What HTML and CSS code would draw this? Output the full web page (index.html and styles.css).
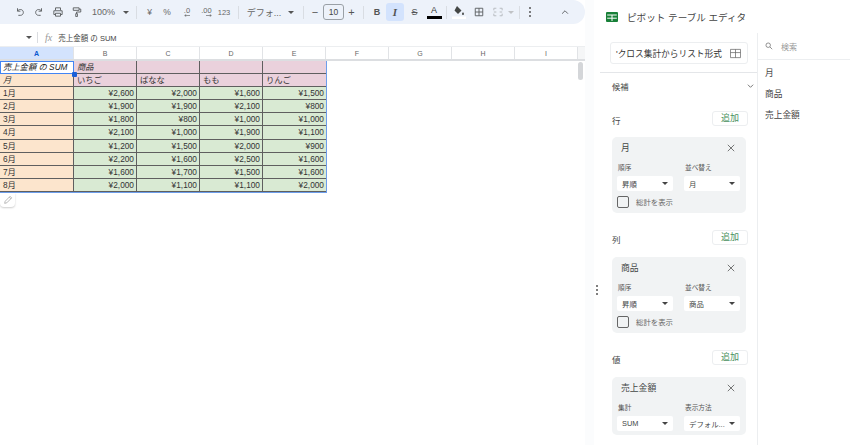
FILE: index.html
```html
<!DOCTYPE html>
<html lang="ja">
<head>
<meta charset="utf-8">
<title>ピボット テーブル エディタ</title>
<link rel="stylesheet" href="styles.css">
</head>
<body>
<div class="app">
  <main class="sheet">
    <div class="toolbar">
      <svg class="ic" viewBox="0 0 12 12"><path d="M3 1.500v3.500h3.500M3 5c1-1.500 2-2 3.500-2 2 0 3.500 1.500 3.500 3.500S8.500 10 6.500 10H4"/></svg>
      <svg class="ic" viewBox="0 0 12 12"><path d="M9 1.500v3.500H5.500M9 5c-1-1.500-2-2-3.500-2C3.500 3 2 4.500 2 6.500S3.500 10 5.500 10H8"/></svg>
      <svg class="ic" viewBox="0 0 12 12"><path d="M3 4V1h6v3M3 9H1V4.500h10V9H9M3 7.500h6V11H3z"/></svg>
      <svg class="ic" viewBox="0 0 12 12"><path d="M1.500 1h7v3h-7zM8.500 2.500H10.500V6H5.500V8M4.500 8h2v3.500h-2z"/></svg>
      <span class="tb-text zoom">100%</span>
      <span class="caret"></span>
      <span class="sep"></span>
      <span class="tb-text">¥</span>
      <span class="tb-text">%</span>
      <span class="dec"><span class="tb-text small">.0</span><svg class="dec-arrow" viewBox="0 0 8 4"><path d="M8 2H1M3 .500L1 2l2 1.500"/></svg></span>
      <span class="dec"><span class="tb-text small">.00</span><svg class="dec-arrow" viewBox="0 0 8 4"><path d="M0 2h7M5 .500L7 2 5 3.500"/></svg></span>
      <span class="tb-text small">123</span>
      <span class="sep"></span>
      <span class="tb-text font">デフォ...</span>
      <span class="caret"></span>
      <span class="sep"></span>
      <span class="tb-text pm">−</span>
      <span class="fsize">10</span>
      <span class="tb-text pm">+</span>
      <span class="sep"></span>
      <span class="tb-btn bold">B</span>
      <span class="tb-btn italic">I</span>
      <span class="tb-btn strike">S</span>
      <span class="tb-btn color">A</span>
      <span class="sep"></span>
      <svg class="ic fill" viewBox="0 0 14 14"><path class="solid" d="M5 1l4.500 4.500-3.500 3.500-3.500-3.500zM11 7c.7 1 1 1.500 1 2a1 1 0 0 1-2 0c0-.5.300-1 1-2z"/><rect class="white" x="0" y="11.500" width="14" height="2.500"/></svg>
      <svg class="ic" viewBox="0 0 12 12"><path d="M1.500 1.500h9v9h-9zM6 1.500v9M1.500 6h9"/></svg>
      <svg class="ic merge" viewBox="0 0 12 12"><path d="M1 4V1.500h3M8 1.500h3V4M1 8v2.500h3M8 10.500h3V8M1 6h3M8 6h3"/></svg>
      <span class="caret light"></span>
      <span class="sep"></span>
      <span class="dots"><i></i><i></i><i></i></span>
      <svg class="ic chev" viewBox="0 0 12 12"><path d="M2.500 8L6 4.500 9.500 8"/></svg>
    </div>
    <div class="formula">
      <span class="caret dark"></span>
      <span class="f-sep"></span>
      <span class="fx">fx</span>
      <span class="f-text">売上金額 の SUM</span>
    </div>
    <div class="col-heads">
      <div class="ch active">A</div><div class="ch">B</div><div class="ch">C</div><div class="ch">D</div><div class="ch">E</div><div class="ch">F</div><div class="ch">G</div><div class="ch">H</div><div class="ch">I</div>
      <div class="ch-end"></div>
    </div>
    <div class="grid-wrap">
      <div class="grid">
        <div class="c a it sel">売上金額 の SUM</div><div class="c p it">商品</div><div class="c p"></div><div class="c p"></div><div class="c p e"></div>
        <div class="c a it">月</div><div class="c p">いちご</div><div class="c p">ばなな</div><div class="c p">もも</div><div class="c p e">りんご</div>
        <div class="c a">1月</div><div class="c g">¥2,600</div><div class="c g">¥2,000</div><div class="c g">¥1,600</div><div class="c g e">¥1,500</div>
        <div class="c a">2月</div><div class="c g">¥1,900</div><div class="c g">¥1,900</div><div class="c g">¥2,100</div><div class="c g e">¥800</div>
        <div class="c a">3月</div><div class="c g">¥1,800</div><div class="c g">¥800</div><div class="c g">¥1,000</div><div class="c g e">¥1,000</div>
        <div class="c a">4月</div><div class="c g">¥2,100</div><div class="c g">¥1,000</div><div class="c g">¥1,900</div><div class="c g e">¥1,100</div>
        <div class="c a">5月</div><div class="c g">¥1,200</div><div class="c g">¥1,500</div><div class="c g">¥2,000</div><div class="c g e">¥900</div>
        <div class="c a">6月</div><div class="c g">¥2,200</div><div class="c g">¥1,600</div><div class="c g">¥2,500</div><div class="c g e">¥1,600</div>
        <div class="c a">7月</div><div class="c g">¥1,600</div><div class="c g">¥1,700</div><div class="c g">¥1,500</div><div class="c g e">¥1,600</div>
        <div class="c a">8月</div><div class="c g">¥2,000</div><div class="c g">¥1,100</div><div class="c g">¥1,100</div><div class="c g e">¥2,000</div>
        <span class="handle"></span>
      </div>
      <div class="pencil"><svg viewBox="0 0 12 12"><path d="M2 10l.600-2.500L8.500 1.600l1.900 1.900L4.500 9.400zM7.500 2.600l1.900 1.900"/></svg></div>
      <div class="scrollbar"><div class="thumb"></div></div>
    </div>
  </main>
  <div class="gutter"><span class="handle-dots"><i></i><i></i><i></i></span></div>
  <aside class="panel">
    <header class="p-head">
      <svg class="logo" viewBox="0 0 12 10"><rect width="12" height="10" rx="1" fill="#188038"/><path d="M1.200 3h9.600M1.200 6.200h9.600M6 3v6" stroke="#fff" stroke-width="1"/></svg>
      <span class="p-title">ピボット テーブル エディタ</span>
    </header>
    <div class="p-body">
      <div class="p-left">
        <div class="range-wrap">
          <div class="range"><span class="range-text">'クロス集計からリスト形式</span>
            <svg class="range-ic" viewBox="0 0 12 12"><path d="M.500 1.500h11v9H.500zM.500 5h11M6 1.500v9"/></svg></div>
        </div>
        <div class="suggest"><span>候補</span><svg class="sug-chev" viewBox="0 0 8 6"><path d="M1 1.500l3 3 3-3"/></svg></div>
        <div class="sec-head s-first"><span class="sec-label">行</span><button class="add">追加</button></div>
        <section class="card">
          <div class="card-head"><span>月</span><svg class="x" viewBox="0 0 10 10"><path d="M1 1l8 8M9 1l-8 8"/></svg></div>
          <div class="fields">
            <div class="field"><label>順序</label><div class="dd"><span>昇順</span><i></i></div></div>
            <div class="field"><label>並べ替え</label><div class="dd"><span>月</span><i></i></div></div>
          </div>
          <div class="check"><span class="box"></span><span>総計を表示</span></div>
        </section>
        <div class="sec-head"><span class="sec-label">列</span><button class="add">追加</button></div>
        <section class="card">
          <div class="card-head"><span>商品</span><svg class="x" viewBox="0 0 10 10"><path d="M1 1l8 8M9 1l-8 8"/></svg></div>
          <div class="fields">
            <div class="field"><label>順序</label><div class="dd"><span>昇順</span><i></i></div></div>
            <div class="field"><label>並べ替え</label><div class="dd"><span>商品</span><i></i></div></div>
          </div>
          <div class="check"><span class="box"></span><span>総計を表示</span></div>
        </section>
        <div class="sec-head"><span class="sec-label">値</span><button class="add">追加</button></div>
        <section class="card">
          <div class="card-head"><span>売上金額</span><svg class="x" viewBox="0 0 10 10"><path d="M1 1l8 8M9 1l-8 8"/></svg></div>
          <div class="fields">
            <div class="field"><label>集計</label><div class="dd"><span>SUM</span><i></i></div></div>
            <div class="field"><label>表示方法</label><div class="dd"><span>デフォル...</span><i></i></div></div>
          </div>
        </section>
      </div>
      <div class="p-right">
        <div class="search">
          <svg class="s-ic" viewBox="0 0 10 10"><circle cx="4" cy="4" r="2.800"/><path d="M6.200 6.200L9 9"/></svg>
          <span>検索</span>
        </div>
        <ul class="f-list"><li>月</li><li>商品</li><li>売上金額</li></ul>
      </div>
    </div>
  </aside>
</div>
</body>
</html>
```

FILE: styles.css
```css
* { box-sizing: border-box; }
html, body { margin: 0; height: 100%; overflow: hidden; background: #fff; }
body { font-family: "Liberation Sans", "Noto Sans CJK JP", sans-serif; color: #444746; }
.app { display: flex; width: 850px; height: 445px; }

/* Sheet */
.sheet { width: 585px; flex: none; background: #fff; display: flex; flex-direction: column; }
.toolbar {
  height: 24px; background: #edf2fa; border-radius: 0 12px 12px 0; flex: none; padding-left: 10px;
  display: grid; align-items: center; justify-items: center;
  grid-template-columns: 19.500px 19.500px 18.500px 18.500px 35px 10px 11px 15px 20px 20px 19px 16px 13px 38px 15px 10px 14px 23px 13px 11px 16px 20px 19px 20px 4px 21px 20px 18px 8px 9px 12px 49px;
}
.ic { width: 10px; height: 10px; fill: none; stroke: #5a5d5f; stroke-width: 1.100; }
.tb-text { font-size: 8.500px; color: #666; white-space: nowrap; }
.zoom { font-size: 9px; }
.caret { width: 0; height: 0; border: 3px solid transparent; border-top: 3px solid #555; border-bottom: 0; }
.caret.light { border-top-color: #c0c2c5; }
.sep { width: 1px; height: 13px; background: #d9dde3; }
.small { font-size: 7.500px; line-height: 7px; }
.dec { display: flex; flex-direction: column; align-items: flex-end; }
.dec-arrow { width: 6px; height: 3px; fill: none; stroke: #555; stroke-width: .8; }
.font { font-size: 9px; }
.pm { font-size: 11px; color: #555; }
.fsize { width: 21px; height: 16px; border: 1px solid #9aa0a6; border-radius: 3px; font-size: 8.500px; text-align: center; line-height: 14px; }
.tb-btn { height: 18px; width: 18px; border-radius: 3px; font-size: 9px; text-align: center; line-height: 18px; color: #555; }
.bold { font-weight: bold; }
.italic { background: #d3e3fd; font-style: italic; font-weight: bold; font-size: 11px; font-family: "Liberation Serif", serif; }
.strike { text-decoration: line-through; }
.color { border-bottom: 3px solid #000; height: 14px; line-height: 10px; width: 15px; border-radius: 0; color: #333; }
.fill { width: 14px; height: 14px; stroke: none; }
.solid { fill: #444746; }
.white { fill: #fff; }
.merge { stroke: #b5b8bc; }
.dots { display: flex; flex-direction: column; gap: 2px; }
.dots i { width: 2px; height: 2px; background: #555; border-radius: 50%; }
.chev { justify-self: start; margin-left: 24px; }

.formula { height: 18px; margin-top: 4px; display: flex; align-items: center; padding-left: 26px; flex: none; font-size: 7.500px; }
.f-sep { width: 1px; height: 11px; background: #dadce0; margin-left: 5px; }
.fx { font-family: "Liberation Serif", serif; font-style: italic; color: #999; font-size: 10px; margin-left: 7px; margin-right: 6px; }
.f-text { color: #444; }

.col-heads { height: 15px; display: flex; flex: none; border-top: 1px solid #eceef0; border-bottom: 2px solid #dcdee1; }
.ch { width: 63px; font-size: 7px; line-height: 13px; text-align: center; color: #666; border-right: 1px solid #e1e3e6; flex: none; }
.ch.active { width: 74px; background: #d3e3fd; color: #0b57d0; font-weight: bold; }
.ch-end { flex: 1; background: #f5f6f7; }

.grid-wrap { flex: 1; display: flex; position: relative; }
.grid { display: grid; grid-template-columns: 74px 63px 63px 63px 63px; grid-auto-rows: 13.100px; width: 327px; height: 132px; position: relative; border-right: 1px solid #6d9eeb; border-bottom: 1px solid #6d9eeb; flex: none; align-self: flex-start; }
.c { font-size: 8.300px; line-height: 13.500px; padding: 0 2px 0 3px; color: #333; border-right: 1px solid #5f5f5f; border-bottom: 1px solid #5f5f5f; white-space: nowrap; overflow: hidden; }
.c.e { border-right: 0; }
.a { background: #fce5cd; }
.p { background: #ead1dc; }
.g { background: #d9ead3; text-align: right; }
.it { font-style: italic; }
.sel { background: #fff; outline: 1.500px solid #4285f4; outline-offset: -1px; border: 0; color: #222; }
.handle { position: absolute; left: 72px; top: 11px; width: 5px; height: 5px; background: #1a5fd8; border-radius: 1px; }
.pencil { position: absolute; left: 0; top: 132px; width: 15px; height: 14px; background: #fff; border-radius: 0 0 4px 4px; box-shadow: 0 1px 2px rgba(0,0,0,.2); display: flex; align-items: center; justify-content: center; }
.pencil svg { width: 10px; height: 10px; fill: none; stroke: #aaa; stroke-width: 1; }
.scrollbar { margin-left: auto; width: 7px; padding-top: 1px; }
.thumb { width: 5px; height: 18px; background: #d4d6d9; border-radius: 3px; }

.gutter { width: 9px; flex: none; background: #fbfcfd; position: relative; }
.handle-dots { display: flex; flex-direction: column; gap: 2px; position: absolute; left: 11px; top: 285px; z-index: 1; }
.handle-dots i { width: 2px; height: 2px; background: #555; border-radius: 50%; }

/* Panel */
.panel { flex: 1; background: #fff; display: flex; flex-direction: column; min-width: 0; }
.p-head { height: 33px; display: flex; align-items: center; padding-left: 12px; flex: none; }
.logo { width: 12px; height: 10px; flex: none; }
.p-title { font-size: 9.600px; margin-left: 9px; color: #444; }
.p-body { flex: 1; display: flex; min-height: 0; }
.p-left { width: 164px; flex: none; border-right: 1px solid #eceef0; overflow: hidden; }
.range-wrap { padding: 9px 0 8px 10px; margin-left: 6px; border-bottom: 1px solid #e4e6e9; }
.range { height: 22px; border: 1px solid #eceef0; border-radius: 3px; display: flex; align-items: center; padding: 0 6px 0 5px; width: 138px; justify-content: space-between; }
.range-text { font-size: 8.700px; color: #333; white-space: nowrap; }
.range-ic { width: 11px; height: 11px; fill: none; stroke: #666; stroke-width: .8; flex: none; }
.suggest { display: flex; justify-content: space-between; align-items: center; font-size: 8.300px; padding: 0 3px 0 18px; height: 26px; }
.sug-chev { width: 7px; height: 6px; fill: none; stroke: #666; stroke-width: 1; }
.sec-head { display: flex; justify-content: space-between; align-items: center; padding: 0 9px 0 18px; height: 16px; margin-top: 16px; margin-bottom: 12px; font-size: 8.500px; }
.sec-label { padding-top: 3px; }
.s-first { margin-top: 11px; margin-bottom: 11px; }
.add { width: 36px; height: 15px; border: 1px solid #eceef0; border-radius: 3px; background: #fff; color: #4a9160; font-size: 9px; padding: 0; font-family: inherit; line-height: 13px; }
.card { margin-left: 18px; width: 134px; background: #f1f3f4; border-radius: 5px; padding: 0 5px; }
.card-head { display: flex; justify-content: space-between; align-items: center; padding: 3px 6px 0 4px; height: 18px; font-size: 8.800px; }
.x { width: 8px; height: 8px; fill: none; stroke: #555; stroke-width: 1; }
.fields { display: flex; gap: 11px; margin-top: 8px; }
.field { width: 56px; }
.field label { display: block; font-size: 6.700px; line-height: 9px; margin-bottom: 4px; padding-left: 1px; color: #555; }
.dd { height: 15px; background: #fff; border-radius: 2px; display: flex; justify-content: space-between; align-items: center; padding: 0 5px; font-size: 7.400px; }
.dd span { white-space: nowrap; }
.dd i { width: 0; height: 0; border: 3px solid transparent; border-top: 3px solid #444; border-bottom: 0; }
.card:last-child { padding-bottom: 4px; }
.check { display: flex; align-items: center; gap: 7px; height: 22px; padding-bottom: 1px; font-size: 7.400px; color: #666; }
.box { width: 12px; height: 12px; border: 1px solid #666; border-radius: 2px; flex: none; }
.p-right { flex: 1; min-width: 0; }
.search { height: 27px; display: flex; align-items: center; padding-left: 7px; gap: 8px; font-size: 8px; color: #999; border-bottom: 1px solid #eceef0; }
.s-ic { width: 8px; height: 8px; fill: none; stroke: #777; stroke-width: 1; }
.f-list { list-style: none; margin: 0; padding: 0 0 0 7px; font-size: 8.700px; color: #444; }
.f-list li { height: 21px; line-height: 21px; }
.f-list li:first-child { margin-top: 3px; }
```
